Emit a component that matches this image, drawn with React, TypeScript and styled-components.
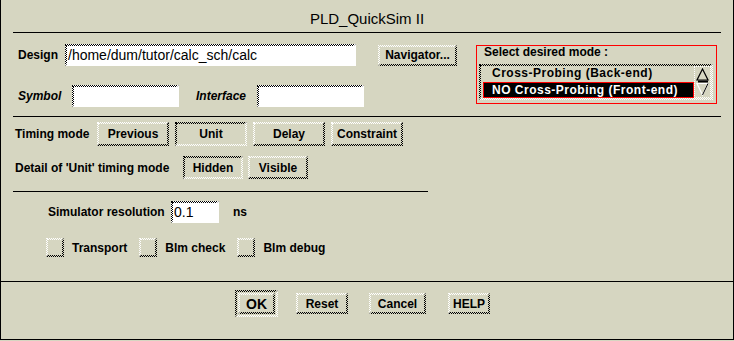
import React from "react";
import styled, { createGlobalStyle, css } from "styled-components";

const GlobalStyle = createGlobalStyle`
  html, body { margin: 0; padding: 0; background: #d6d6c1; }
  body { font-family: "Liberation Sans", Arial, sans-serif; }
  * { box-sizing: border-box; }
`;

/* Motif-like stippled 2px bevel: two 1px dotted rings */
const bevel = (sunken?: boolean) => css`
  position: relative;
  border-width: 1px;
  border-style: dotted;
  border-color: ${sunken ? "#000 #fff #fff #000" : "#fff #000 #000 #fff"};
  &::after {
    content: "";
    position: absolute;
    inset: 0;
    border-width: 1px;
    border-style: dotted;
    border-color: inherit;
    pointer-events: none;
  }
`;

const Window = styled.div`
  width: 734px;
  height: 340px;
  background: #d6d6c1;
  border-left: 1px solid #000;
  border-right: 1px solid #000;
  border-bottom: 1px solid #000;
  display: flex;
  flex-direction: column;
  color: #000;
`;

const Title = styled.div`
  height: 32px;
  padding-top: 11px;
  text-align: center;
  font-size: 15px;
  line-height: 16px;
`;

const Rule = styled.div<{ $left?: number; $width?: number }>`
  height: 1px;
  background: #000;
  margin-left: ${(p) => p.$left ?? 0}px;
  width: ${(p) => (p.$width ? `${p.$width}px` : "auto")};
  ${(p) => (p.$width ? "" : `margin-right: ${p.$left ?? 0}px;`)}
  flex: none;
`;

const TopSection = styled.div`
  height: 83px;
  padding: 11px 0 0 17px;
  display: flex;
  align-items: flex-start;
`;

const LeftCol = styled.div`
  display: flex;
  flex-direction: column;
  gap: 19px;
`;

const Row = styled.div<{ $gap?: number }>`
  display: flex;
  align-items: center;
  gap: ${(p) => p.$gap ?? 0}px;
`;

const Label = styled.span<{ $w?: number; $italic?: boolean; $ml?: number }>`
  font-size: 12px;
  font-weight: bold;
  font-style: ${(p) => (p.$italic ? "italic" : "normal")};
  width: ${(p) => (p.$w ? `${p.$w}px` : "auto")};
  margin-left: ${(p) => p.$ml ?? 0}px;
  flex: none;
  white-space: nowrap;
  line-height: 14px;
`;

const TextField = styled.div<{ $w: number }>`
  ${bevel(true)};
  background: #fff;
  width: ${(p) => p.$w}px;
  height: 22px;
  padding: 1px 2px;
  font-size: 14px;
  line-height: 18px;
  flex: none;
  white-space: nowrap;
  overflow: hidden;
`;

const Button = styled.button<{ $w: number; $h?: number; $pressed?: boolean; $ml?: number }>`
  ${(p) => bevel(p.$pressed)};
  background: #d6d6c1;
  width: ${(p) => p.$w}px;
  height: ${(p) => p.$h ?? 21}px;
  margin-left: ${(p) => p.$ml ?? 0}px;
  padding: 0;
  font-family: "Liberation Sans", Arial, sans-serif;
  font-size: 12px;
  font-weight: bold;
  color: #000;
  flex: none;
  line-height: 14px;
`;

const ModeGroup = styled.div`
  margin-left: 19px;
  margin-top: 1px;
  width: 241px;
  height: 59px;
  border: 1px solid #f00;
  padding: 0 3px 0 2px;
`;

const GroupTitle = styled.div`
  font-size: 12px;
  font-weight: bold;
  line-height: 12px;
  padding-left: 5px;
`;

const ListBox = styled.div`
  ${bevel(true)};
  margin-top: 6px;
  width: 234px;
  height: 36px;
  display: flex;
  padding: 1px;
`;

const Items = styled.div`
  flex: 1;
  display: flex;
  flex-direction: column;
  padding-left: 2px;
`;

const Item = styled.div<{ $selected?: boolean }>`
  height: ${(p) => (p.$selected ? 16 : 15)}px;
  padding-left: ${(p) => (p.$selected ? 8 : 9)}px;
  font-size: 12px;
  font-weight: bold;
  letter-spacing: 0.5px;
  line-height: 14px;
  white-space: nowrap;
  color: ${(p) => (p.$selected ? "#fff" : "#000")};
  background: ${(p) => (p.$selected ? "#000" : "transparent")};
  border: ${(p) => (p.$selected ? "1px solid #f00" : "none")};
  margin-top: ${(p) => (p.$selected ? 1 : 0)}px;
`;

const Scroller = styled.div`
  width: 17px;
  border: 1px dotted #fff;
  display: flex;
  align-items: center;
  justify-content: center;
`;

const TimingSection = styled.div`
  height: 74px;
  padding: 5px 0 0 14px;
  display: flex;
  flex-direction: column;
  gap: 10px;
`;

const SimSection = styled.div`
  height: 89px;
  display: flex;
  flex-direction: column;
  padding-top: 9px;
  gap: 15px;
`;

const SimRow = styled.div`
  display: flex;
  align-items: center;
  padding-left: 47px;
`;

const Unit = styled.span`
  font-size: 12px;
  font-weight: bold;
  margin-left: 14px;
`;

const CheckRow = styled.div`
  display: flex;
  align-items: center;
  padding-left: 45px;
  gap: 12px;
`;

const CheckItem = styled.label`
  display: flex;
  align-items: center;
  gap: 8px;
  font-size: 12px;
  font-weight: bold;
`;

const CheckBox = styled.span`
  ${bevel(false)};
  width: 18px;
  height: 19px;
  flex: none;
`;

const ActionRow = styled.div`
  flex: 1;
  display: flex;
  align-items: flex-start;
  padding: 7px 0 0 234px;
`;

const DefaultFrame = styled.div`
  ${bevel(true)};
  padding: 2px;
  display: flex;
  flex: none;
`;

const ActionGroup = styled.div`
  display: flex;
  align-items: center;
  height: 29px;
`;

const OkButton = styled(Button)`
  font-size: 14px;
`;

function ScrollArrows() {
  return (
    <svg width="13" height="28" viewBox="0 0 13 28">
      <path d="M6.5 1 L1 12 L12 12 Z" fill="none" stroke="#000" strokeWidth="1.2" />
      <path d="M2 13.5 H12" stroke="#000" strokeWidth="2" />
      <path d="M1 15.5 L12 15.5 L6.5 27 Z" fill="none" stroke="#fff" strokeWidth="1.2" />
      <path d="M6.5 27 L12 15.5" stroke="#000" strokeWidth="1" />
    </svg>
  );
}

export default function App() {
  return (
    <>
      <GlobalStyle />
      <Window>
        <Title>PLD_QuickSim II</Title>
        <Rule $left={12} />
        <TopSection>
          <LeftCol>
            <Row>
              <Label $w={47}>Design</Label>
              <TextField $w={291}>/home/dum/tutor/calc_sch/calc</TextField>
              <Button $w={79} $ml={22}>Navigator...</Button>
            </Row>
            <Row>
              <Label $w={54} $italic>Symbol</Label>
              <TextField $w={107} />
              <Label $w={61} $italic $ml={17}>Interface</Label>
              <TextField $w={107} />
            </Row>
          </LeftCol>
          <ModeGroup>
            <GroupTitle>Select desired mode :</GroupTitle>
            <ListBox>
              <Items>
                <Item>Cross-Probing (Back-end)</Item>
                <Item $selected>NO Cross-Probing (Front-end)</Item>
              </Items>
              <Scroller>
                <ScrollArrows />
              </Scroller>
            </ListBox>
          </ModeGroup>
        </TopSection>
        <Rule $left={12} />
        <TimingSection>
          <Row $gap={6}>
            <Label $w={76}>Timing mode</Label>
            <Button $w={72} $h={24}>Previous</Button>
            <Button $w={72} $h={24} $pressed>Unit</Button>
            <Button $w={72} $h={24}>Delay</Button>
            <Button $w={72} $h={24}>Constraint</Button>
          </Row>
          <Row $gap={5}>
            <Label $w={163}>Detail of 'Unit' timing mode</Label>
            <Button $w={60} $h={23} $pressed>Hidden</Button>
            <Button $w={60} $h={23}>Visible</Button>
          </Row>
        </TimingSection>
        <Rule $left={12} $width={415} />
        <SimSection>
          <SimRow>
            <Label $w={123}>Simulator resolution</Label>
            <TextField $w={48}>0.1</TextField>
            <Unit>ns</Unit>
          </SimRow>
          <CheckRow>
            <CheckItem>
              <CheckBox />
              Transport
            </CheckItem>
            <CheckItem>
              <CheckBox />
              Blm check
            </CheckItem>
            <CheckItem>
              <CheckBox />
              Blm debug
            </CheckItem>
          </CheckRow>
        </SimSection>
        <Rule />
        <ActionRow>
          <ActionGroup>
            <DefaultFrame>
              <OkButton $w={37}>OK</OkButton>
            </DefaultFrame>
            <Button $w={52} $ml={18}>Reset</Button>
            <Button $w={57} $ml={21}>Cancel</Button>
            <Button $w={42} $ml={22}>HELP</Button>
          </ActionGroup>
        </ActionRow>
      </Window>
    </>
  );
}
